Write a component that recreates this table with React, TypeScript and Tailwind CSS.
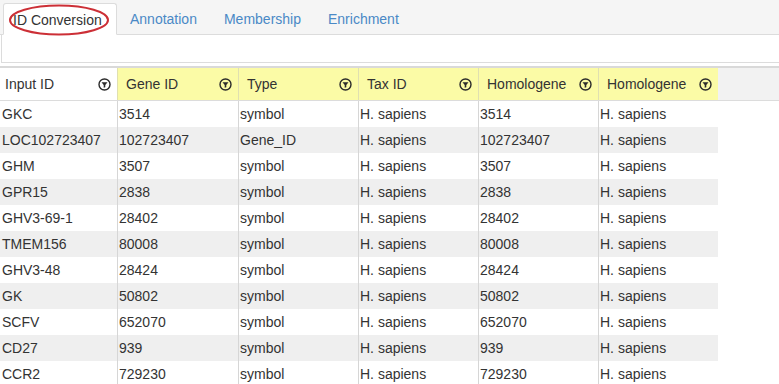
import React from "react";

const cols = [
  { name: "Input ID", w: "w-[117px]", yellow: false },
  { name: "Gene ID", w: "w-[121px]", yellow: true },
  { name: "Type", w: "w-[120px]", yellow: true },
  { name: "Tax ID", w: "w-[120px]", yellow: true },
  { name: "Homologene", w: "w-[120px]", yellow: true },
  { name: "Homologene", w: "w-[120px]", yellow: true },
];

const rows: string[][] = [
  ["GKC", "3514", "symbol", "H. sapiens", "3514", "H. sapiens"],
  ["LOC102723407", "102723407", "Gene_ID", "H. sapiens", "102723407", "H. sapiens"],
  ["GHM", "3507", "symbol", "H. sapiens", "3507", "H. sapiens"],
  ["GPR15", "2838", "symbol", "H. sapiens", "2838", "H. sapiens"],
  ["GHV3-69-1", "28402", "symbol", "H. sapiens", "28402", "H. sapiens"],
  ["TMEM156", "80008", "symbol", "H. sapiens", "80008", "H. sapiens"],
  ["GHV3-48", "28424", "symbol", "H. sapiens", "28424", "H. sapiens"],
  ["GK", "50802", "symbol", "H. sapiens", "50802", "H. sapiens"],
  ["SCFV", "652070", "symbol", "H. sapiens", "652070", "H. sapiens"],
  ["CD27", "939", "symbol", "H. sapiens", "939", "H. sapiens"],
  ["CCR2", "729230", "symbol", "H. sapiens", "729230", "H. sapiens"],
];

function FilterIcon() {
  return (
    <svg width="13" height="13" viewBox="0 0 13 13" className="shrink-0">
      <circle cx="6.5" cy="6.5" r="5.5" fill="none" stroke="#2b2b2b" strokeWidth="1.4" />
      <path d="M3.5 4.3 H9.5 L7.3 7 V9.2 L5.7 9.8 V7 Z" fill="#2b2b2b" />
    </svg>
  );
}

export default function App() {
  return (
    <div
      className="w-[779px] h-[384px] overflow-hidden bg-white text-[14px] text-[#333]"
      style={{ fontFamily: '"Liberation Sans", Arial, sans-serif' }}
    >
      {/* tab bar */}
      <div className="h-[35px] bg-[#f5f5f5] border-b border-[#dcdcdc] flex items-end">
        <div className="relative ml-[3px] w-[114px] h-[32px] -mb-px bg-white border border-[#dcdcdc] border-b-white rounded-t-[3px] flex items-center pl-[9px] pt-[2px] text-[#333]">
          <span className="leading-none">ID Conversion</span>
          <svg
            className="absolute left-[4px] top-[0px] pointer-events-none"
            width="102"
            height="32"
            viewBox="0 0 102 32"
          >
            <ellipse cx="51" cy="16" rx="49" ry="14.5" fill="none" stroke="#cc2f36" strokeWidth="2" />
          </svg>
        </div>
        <div className="flex gap-[27px] ml-[13px] h-[32px] pt-[2px] items-center text-[#4a89c6]">
          <span>Annotation</span>
          <span>Membership</span>
          <span>Enrichment</span>
        </div>
      </div>

      {/* panel */}
      <div className="h-[28px] border-l border-b border-[#dcdcdc] ml-[1px] bg-white" />
      <div className="h-[3px] bg-white" />

      {/* table */}
      <div className="border-t-2 border-[#d9d9d9]">
        <div className="flex h-[33px] bg-[#f2f2f2] border-b border-[#dcdcdc]">
          {cols.map((c, i) => (
            <div
              key={i}
              className={`${c.w} ${c.yellow ? "bg-[#fbfba6] border-l border-[#e0e0b0]" : "bg-white"} flex items-center justify-between ${i === 0 ? "pl-[5px] pr-[6px]" : "pl-[8px] pr-[6px]"}`}
            >
              <span>{c.name}</span>
              <FilterIcon />
            </div>
          ))}
        </div>
        {rows.map((r, ri) => (
          <div key={ri} className="flex h-[26px]">
            {r.map((v, ci) => (
              <div
                key={ci}
                className={`${cols[ci].w} ${ri % 2 === 1 ? "bg-[#efefef]" : "bg-white"} ${ci === 0 ? "pl-[2px]" : "pl-[1px] border-l border-[#d6d6d6]"} flex items-center whitespace-nowrap overflow-hidden`}
              >
                {v}
              </div>
            ))}
          </div>
        ))}
      </div>
    </div>
  );
}
